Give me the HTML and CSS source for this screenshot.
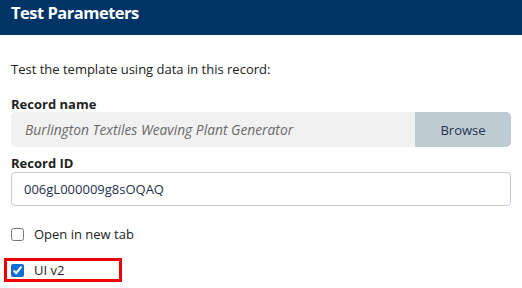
FILE: index.html
```html
<!DOCTYPE html>
<html lang="en">
  <head>
    <meta charset="UTF-8" />
    <meta name="viewport" content="width=device-width, initial-scale=1.0" />
    <title>Test Parameters</title>
    <link rel="stylesheet" href="styles.css">
  </head>
  <body>
    <header class="panel-header">
      <h1>Test Parameters</h1>
    </header>
    <main class="panel-body">
      <p class="intro">Test the template using data in this record:</p>

      <label class="field-label" for="record-name">Record name</label>
      <div class="lookup">
        <input type="text" id="record-name" placeholder="Burlington Textiles Weaving Plant Generator" disabled />
        <button class="browse-btn">Browse</button>
      </div>

      <label class="field-label" for="record-id">Record ID</label>
      <input type="text" id="record-id" class="text-field" value="006gL000009g8sOQAQ" />

      <label class="check-row">
        <input type="checkbox" />
        Open in new tab
      </label>

      <label class="check-row highlighted">
        <input type="checkbox" checked />
        UI v2
      </label>
    </main>
  </body>
</html>
```

FILE: styles.css
```css
body {
  font-family: "Open Sans", Arial, sans-serif;
  font-size: 13px;
  margin: 0;
  padding: 0;
  background-color: #fff;
  color: #222;
}
.panel-header {
  background-color: #003366;
  box-sizing: border-box;
  height: 35px;
  padding: 3px 11px 0;
}
h1 {
  margin: 0;
  font-size: 16.5px;
  line-height: 20px;
  letter-spacing: -0.5px;
  font-weight: 700;
  color: #fff;
}
.panel-body {
  padding: 0 11px;
}
.intro {
  margin: 25px 0 0;
  line-height: 18px;
}
.field-label {
  display: block;
  font-weight: 700;
  line-height: 16px;
  margin-top: 18px;
}
.lookup {
  display: flex;
  height: 35px;
  border-radius: 5px;
  overflow: hidden;
  background-color: #f1f1f1;
}
.lookup input {
  flex: 1;
  border: none;
  background: transparent;
  padding: 0 14px;
  font: inherit;
  font-size: 13.8px;
  font-style: italic;
}
.lookup input::placeholder {
  color: #6b6b6b;
}
.browse-btn {
  width: 96px;
  border: none;
  background-color: #bfcbd3;
  color: #1f3553;
  font: inherit;
}
.lookup + .field-label {
  margin-top: 8px;
}
.text-field {
  display: block;
  box-sizing: border-box;
  width: 100%;
  height: 34px;
  margin-top: 1px;
  padding: 0 12px;
  border: 1px solid #c4cdd5;
  border-radius: 4px;
  font: inherit;
  color: #1d2f4d;
}
.check-row {
  display: flex;
  align-items: center;
  gap: 10px;
  line-height: 18px;
  margin-top: 19px;
}
.check-row input {
  margin: 0;
  width: 13px;
  height: 13px;
  accent-color: #0b70d0;
}
.highlighted {
  width: 108px;
  height: 18px;
  margin: 15px 0 0 -7px;
  padding: 0 0 0 4px;
  border: 3px solid #ee0000;
}
```
